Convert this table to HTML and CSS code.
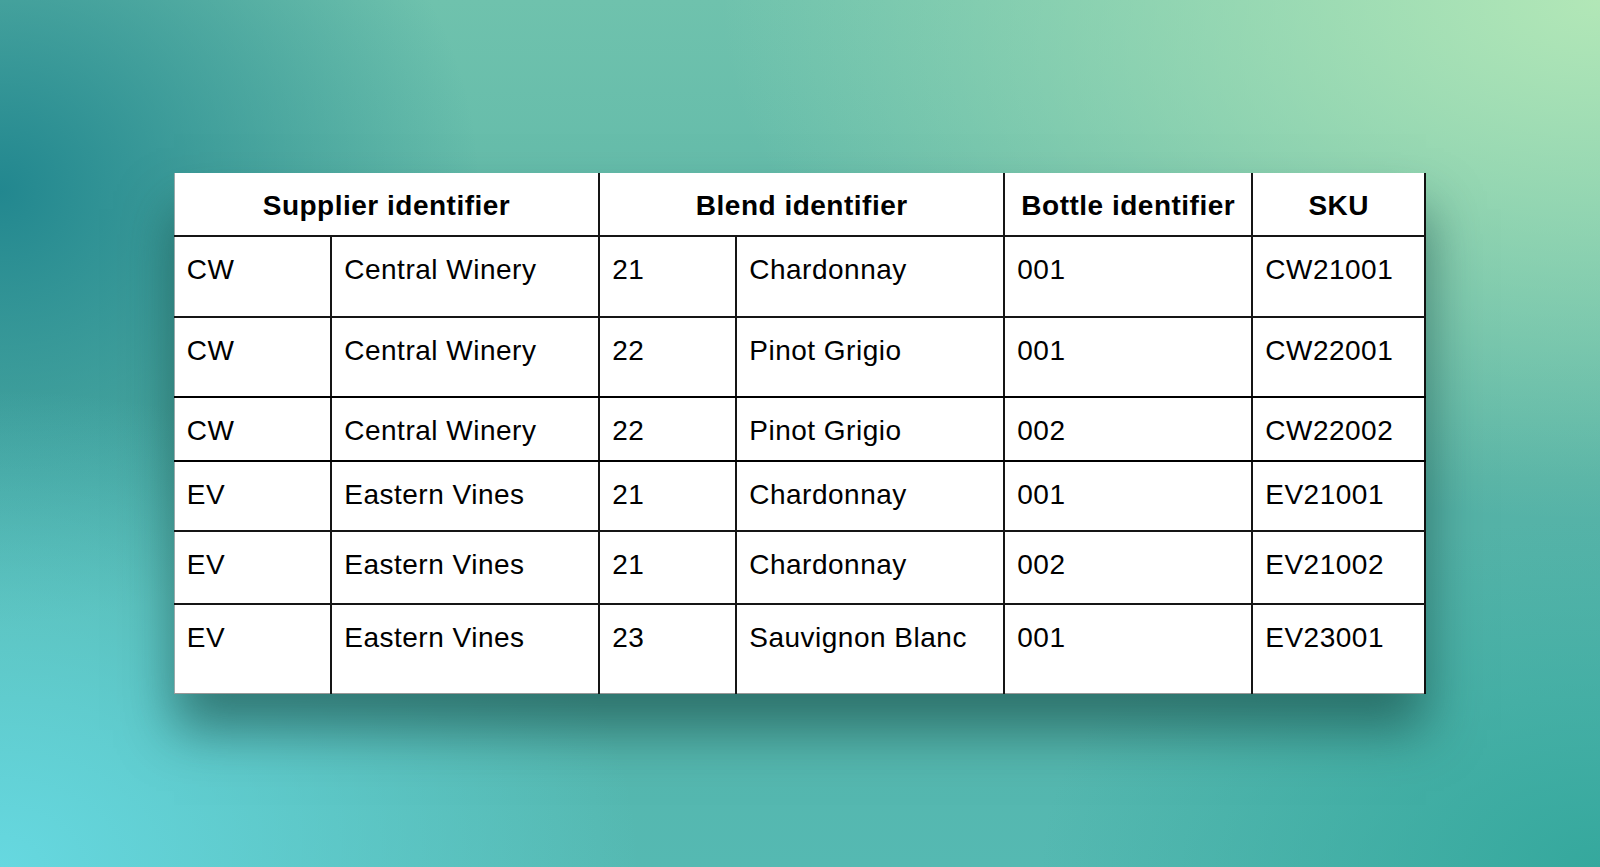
FILE: index.html
```html
<!DOCTYPE html>
<html lang="en">
<head>
<meta charset="utf-8">
<title>SKU table</title>
<link rel="stylesheet" href="styles.css">
</head>
<body>
<main class="stage">
  <table class="sku-table">
    <colgroup>
      <col class="c-code">
      <col class="c-name">
      <col class="c-bnum">
      <col class="c-bname">
      <col class="c-bottle">
      <col class="c-sku">
    </colgroup>
    <thead>
      <tr class="r-head">
        <th colspan="2">Supplier identifier</th>
        <th colspan="2">Blend identifier</th>
        <th>Bottle identifier</th>
        <th>SKU</th>
      </tr>
    </thead>
    <tbody>
      <tr class="r1">
        <td>CW</td><td>Central Winery</td><td>21</td><td>Chardonnay</td><td>001</td><td>CW21001</td>
      </tr>
      <tr class="r2">
        <td>CW</td><td>Central Winery</td><td>22</td><td>Pinot Grigio</td><td>001</td><td>CW22001</td>
      </tr>
      <tr class="r3">
        <td>CW</td><td>Central Winery</td><td>22</td><td>Pinot Grigio</td><td>002</td><td>CW22002</td>
      </tr>
      <tr class="r4">
        <td>EV</td><td>Eastern Vines</td><td>21</td><td>Chardonnay</td><td>001</td><td>EV21001</td>
      </tr>
      <tr class="r5">
        <td>EV</td><td>Eastern Vines</td><td>21</td><td>Chardonnay</td><td>002</td><td>EV21002</td>
      </tr>
      <tr class="r6">
        <td>EV</td><td>Eastern Vines</td><td>23</td><td>Sauvignon Blanc</td><td>001</td><td>EV23001</td>
      </tr>
    </tbody>
  </table>
</main>
</body>
</html>
```

FILE: styles.css
```css
html, body {
  margin: 0;
  padding: 0;
  height: 100%;
}

body {
  font-family: "Liberation Sans", Arial, sans-serif;
  background:
    radial-gradient(ellipse 55% 60% at 100% 0%, #b2e7b7 0%, rgba(178,231,183,0) 100%),
    radial-gradient(ellipse 40% 55% at 0% 100%, #66d8e0 0%, rgba(102,216,224,0) 100%),
    radial-gradient(ellipse 30% 50% at 0% 22%, #22878f 0%, rgba(34,135,143,0) 100%),
    radial-gradient(ellipse 35% 40% at 100% 100%, #35a89d 0%, rgba(53,168,157,0) 100%),
    linear-gradient(180deg, #6fc2ad 0%, #55b2a6 55%, #55b9b2 100%);
  overflow: hidden;
}

.stage {
  height: 867px;
  display: flex;
  align-items: center;
  justify-content: center;
}

.sku-table {
  border-collapse: collapse;
  table-layout: fixed;
  width: 1251px;
  background: #ffffff;
  color: #000;
  box-shadow: 0 36px 50px rgba(20, 70, 65, 0.6);
  border-left: 1px solid #9aa;
  border-right: 2px solid #111;
  border-bottom: 1px solid #999;
}

.c-code { width: 157px; }
.c-name { width: 268px; }
.c-bnum { width: 137px; }
.c-bname { width: 268px; }
.c-bottle { width: 248px; }
.c-sku { width: 173px; }

.sku-table th,
.sku-table td {
  border: 2px solid #151515;
  font-size: 28px;
  line-height: 32px;
  white-space: nowrap;
  overflow: hidden;
}

.sku-table thead th {
  border-top: none;
  font-weight: bold;
  letter-spacing: 0.5px;
  text-align: center;
  vertical-align: middle;
  padding: 4px 4px 0;
}

.sku-table thead th:first-child { border-left: none; }
.sku-table thead th:last-child { border-right: none; }

.sku-table td {
  vertical-align: top;
  text-align: left;
  letter-spacing: 0.5px;
  padding: 17px 6px 0 12px;
}

.sku-table tbody td:first-child { border-left: none; }
.sku-table tbody td:last-child { border-right: none; }
.sku-table tbody tr:last-child td { border-bottom: none; }

.r-head { height: 63px; }
.r1 { height: 81px; }
.r2 { height: 80px; }
.r2 td, .r3 td { border-bottom-color: #000; }
.r3 { height: 64px; }
.r4 { height: 70px; }
.r5 { height: 73px; }
.r6 { height: 89px; }
```
